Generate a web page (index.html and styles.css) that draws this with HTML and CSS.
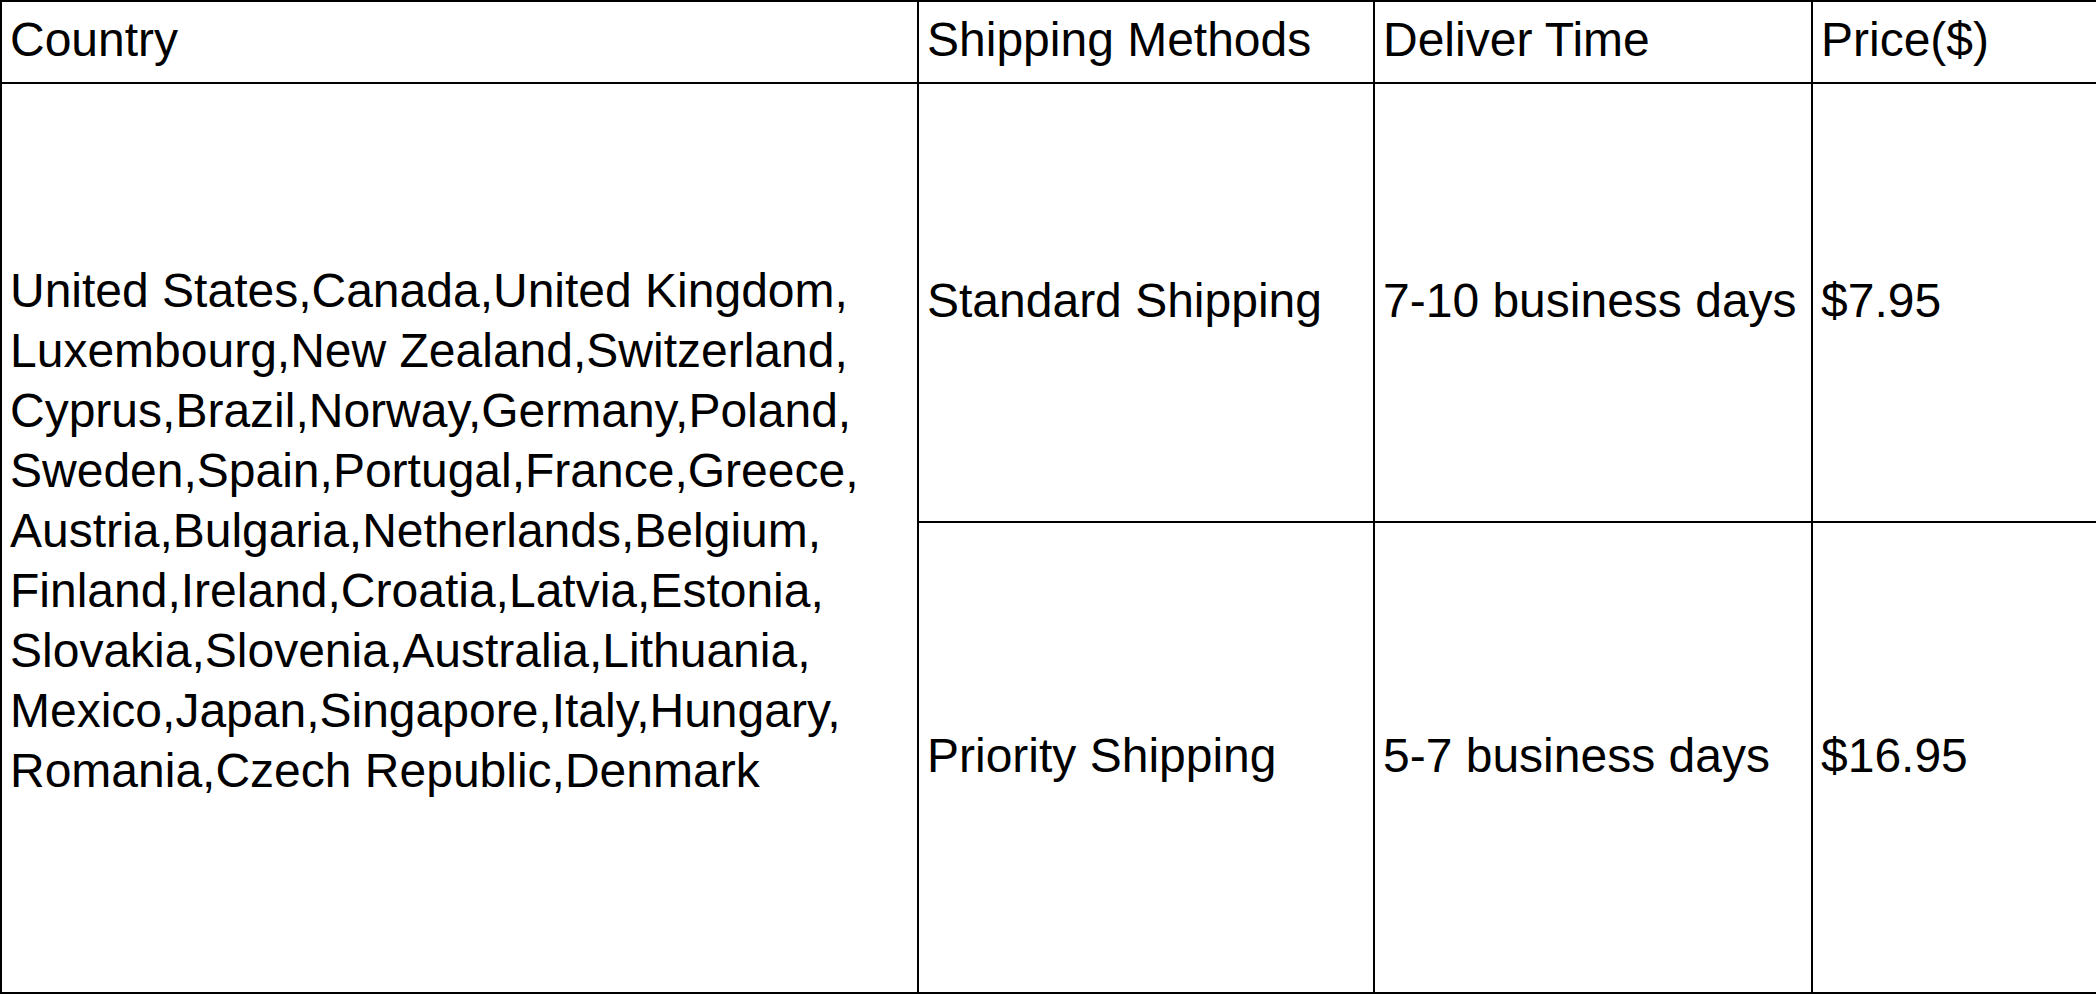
FILE: index.html
```html
<!DOCTYPE html>
<html lang="en">
<head>
<meta charset="utf-8">
<title>Shipping</title>
<link rel="stylesheet" href="styles.css">
</head>
<body>
<table class="ship">
  <colgroup>
    <col class="c-country">
    <col class="c-method">
    <col class="c-time">
    <col class="c-price">
  </colgroup>
  <tr class="head">
    <td>Country</td>
    <td>Shipping Methods</td>
    <td>Deliver Time</td>
    <td>Price($)</td>
  </tr>
  <tr class="r1">
    <td rowspan="2" class="countries">United States,Canada,United Kingdom,<br>Luxembourg,New Zealand,Switzerland,<br>Cyprus,Brazil,Norway,Germany,Poland,<br>Sweden,Spain,Portugal,France,Greece,<br>Austria,Bulgaria,Netherlands,Belgium,<br>Finland,Ireland,Croatia,Latvia,Estonia,<br>Slovakia,Slovenia,Australia,Lithuania,<br>Mexico,Japan,Singapore,Italy,Hungary,<br>Romania,Czech Republic,Denmark</td>
    <td>Standard Shipping</td>
    <td>7-10 business days</td>
    <td>$7.95</td>
  </tr>
  <tr class="r2">
    <td>Priority Shipping</td>
    <td>5-7 business days</td>
    <td>$16.95</td>
  </tr>
</table>
</body>
</html>
```
FILE: styles.css
```css
html, body {
  margin: 0;
  padding: 0;
  background: #fff;
}
.ship {
  border-collapse: collapse;
  table-layout: fixed;
  width: 2096px;
  font-family: "Liberation Sans", Arial, sans-serif;
  font-size: 48px;
  line-height: 60px;
  color: #000;
}
.c-country { width: 917px; }
.c-method { width: 456px; }
.c-time { width: 438px; }
.c-price { width: 285px; }
.ship td {
  border: 2px solid #000;
  padding: 0 0 4px 8px;
  vertical-align: middle;
  text-align: left;
  white-space: nowrap;
}
.ship td.countries {
  padding-bottom: 14px;
}
.head td { height: 76px; }
.r1 td { height: 433px; }
.r2 td { height: 465px; }
```
